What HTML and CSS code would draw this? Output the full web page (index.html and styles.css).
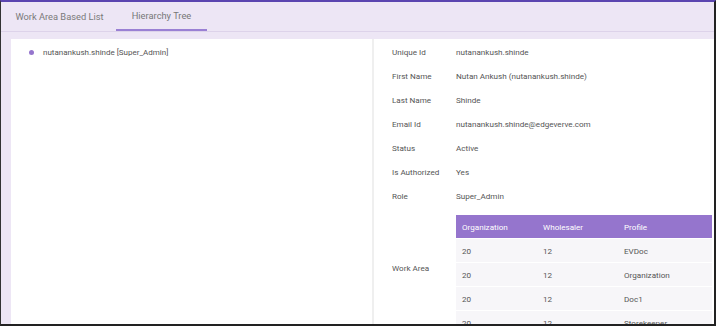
FILE: index.html
```html
<!DOCTYPE html>
<html>
<head>
<meta charset="utf-8">
<link rel="stylesheet" href="styles.css">
</head>
<body>
<div class="frame">
  <div class="tabs">
    <div class="tab first">Work Area Based List</div>
    <div class="tab active">Hierarchy Tree</div>
  </div>
  <div class="content">
    <div class="tree">
      <div class="node"><span class="dot"></span><span>nutanankush.shinde [Super_Admin]</span></div>
    </div>
    <div class="divider"></div>
    <div class="details">
      <div class="row"><div class="label">Unique Id</div><div class="value">nutanankush.shinde</div></div>
      <div class="row"><div class="label">First Name</div><div class="value">Nutan Ankush (nutanankush.shinde)</div></div>
      <div class="row"><div class="label">Last Name</div><div class="value">Shinde</div></div>
      <div class="row"><div class="label">Email Id</div><div class="value">nutanankush.shinde@edgeverve.com</div></div>
      <div class="row"><div class="label">Status</div><div class="value">Active</div></div>
      <div class="row"><div class="label">Is Authorized</div><div class="value">Yes</div></div>
      <div class="row"><div class="label">Role</div><div class="value">Super_Admin</div></div>
      <div class="row wa"><div class="label">Work Area</div>
        <div class="table">
          <div class="tr th"><div>Organization</div><div>Wholesaler</div><div>Profile</div></div>
          <div class="tr"><div>20</div><div>12</div><div>EVDoc</div></div>
          <div class="tr"><div>20</div><div>12</div><div>Organization</div></div>
          <div class="tr"><div>20</div><div>12</div><div>Doc1</div></div>
          <div class="tr"><div>20</div><div>12</div><div>Storekeeper</div></div>
        </div>
      </div>
    </div>
  </div>
</div>
</body>
</html>
```

FILE: styles.css
```css
html, body { margin: 0; padding: 0; }
body { font-family: Roboto, "Liberation Sans", sans-serif; font-size: 8.1px; color: #555; background: #fff; }
.frame {
  width: 716px; height: 326px; box-sizing: border-box;
  border-top: 2px solid #5b45b0; border-left: 1px solid #333; border-right: 2px solid #222; border-bottom: 2px solid #222;
  background: #ede6f5; overflow: hidden; display: flex; flex-direction: column;
}
.tabs { display: flex; height: 29px; border-bottom: 1px solid #ddd3ea; padding-left: 2px; }
.tab { display: flex; align-items: center; justify-content: center; color: #7a7a7a; font-size: 9.3px; white-space: nowrap; box-sizing: border-box; }
.tab.first { width: 113px; }
.tab.active { width: 91px; border-bottom: 2px solid #9a80d4; color: #777; }
.content { flex: 1; display: flex; margin: 7px 0 0 10px; background: #fff; overflow: hidden; }
.tree { width: 361px; padding: 7px 0 0 18px; box-sizing: border-box; font-size: 8px; }
.node { display: flex; align-items: center; gap: 9px; height: 12px; }
.dot { width: 5px; height: 5px; border-radius: 50%; background: #9575cd; }
.divider { width: 2px; background: #efefef; }
.details { flex: 1; padding: 7px 0 0 18px; }
.row { display: flex; height: 24px; align-items: flex-start; line-height: 12px; }
.label { width: 64px; }
.row.wa { height: auto; margin-top: 1px; }
.row.wa .label { padding-top: 47px; }
.table { width: 256px; display: flex; flex-direction: column; gap: 1px; }
.tr { display: grid; grid-template-columns: 81px 81px 1fr; height: 23px; align-items: center; background: #f7f6f9; }
.tr div { padding-left: 6px; }
.tr.th { background: #9575cd; color: #fff; }
```
